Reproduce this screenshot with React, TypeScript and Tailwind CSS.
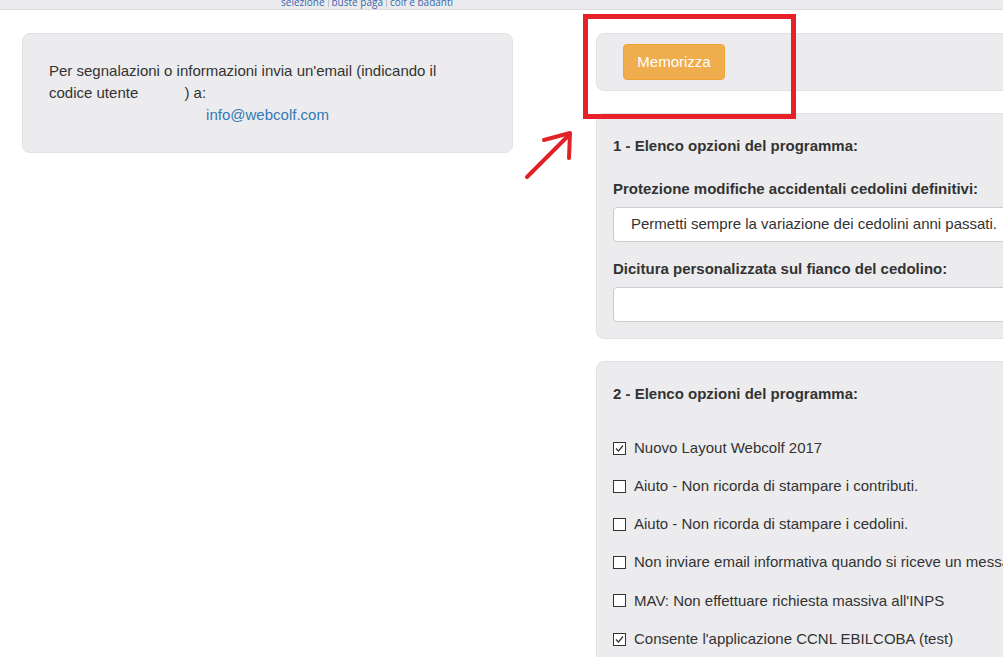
import React from 'react';

const options = [
  { label: 'Nuovo Layout Webcolf 2017', checked: true },
  { label: 'Aiuto - Non ricorda di stampare i contributi.', checked: false },
  { label: 'Aiuto - Non ricorda di stampare i cedolini.', checked: false },
  { label: 'Non inviare email informativa quando si riceve un messaggio', checked: false },
  { label: "MAV: Non effettuare richiesta massiva all'INPS", checked: false },
  { label: "Consente l'applicazione CCNL EBILCOBA (test)", checked: true },
];

const Box = ({ checked }: { checked: boolean }) => (
  <span className="w-[13px] h-[13px] border border-[#333] bg-white flex items-center justify-center shrink-0">
    {checked && (
      <svg width="11" height="11" viewBox="0 0 11 11">
        <path d="M2 5.5 L4.5 8 L9 2.5" fill="none" stroke="#333" strokeWidth="1.2" />
      </svg>
    )}
  </span>
);

const App = () => {
  return (
    <div
      className="relative w-full h-[657px] overflow-hidden bg-white text-[#333] text-[15px]"
      style={{ fontFamily: '"Liberation Sans", Arial, sans-serif' }}
    >
      {/* top header strip, cut off */}
      <div className="h-[10px] bg-[#ebebed] border-b border-[#dcdcdc] overflow-hidden">
        <div className="pl-[281px] mt-[-4px] flex items-center text-[10px] leading-[12px] text-[#3a68ad]" style={{ fontFamily: '"Open Sans", sans-serif' }}>
          <span>selezione</span>
          <span className="mx-[3px] h-[10px] border-l border-[#b8c4d8]" />
          <span>buste paga</span>
          <span className="mx-[3px] h-[10px] border-l border-[#b8c4d8]" />
          <span>colf e badanti</span>
        </div>
      </div>

      <div className="flex pl-[22px] pt-[23px]">
        {/* left column */}
        <div className="w-[491px] shrink-0">
          <div className="bg-[#ececee] border border-[#e2e2e4] rounded-[8px] px-[26px] py-[26px] leading-[22px]">
            <div className="max-w-[425px]">
              Per segnalazioni o informazioni invia un'email (indicando il codice utente{' '}
              <span className="ml-[42px]">) a:</span>
            </div>
            <div className="text-center">
              <a className="text-[#337ab7]">info@webcolf.com</a>
            </div>
          </div>
        </div>

        {/* right column */}
        <div className="ml-[83px] w-[491px] shrink-0 flex flex-col gap-[22px]">
          <div className="bg-[#ececee] border border-[#e2e2e4] rounded-[8px] h-[58px] pt-[10px] pl-[26px]">
            <button className="w-[102px] h-[36px] bg-[#f0ad4e] border border-[#eea236] rounded-[4px] text-white text-[15px]">
              Memorizza
            </button>
          </div>

          <div className="bg-[#ececee] border border-[#e2e2e4] rounded-[8px] pt-[22px] pb-[16px] pl-[16px]">
            <div className="font-bold leading-[20px]">1 - Elenco opzioni del programma:</div>
            <div className="font-bold leading-[20px] mt-[23px]">Protezione modifiche accidentali cedolini definitivi:</div>
            <div className="mt-[8px] h-[35px] bg-white border border-[#cccccc] rounded-[4px] flex items-center pl-[17px] whitespace-nowrap">
              Permetti sempre la variazione dei cedolini anni passati.
            </div>
            <div className="font-bold leading-[20px] mt-[17px]">Dicitura personalizzata sul fianco del cedolino:</div>
            <div className="mt-[8px] h-[35px] bg-white border border-[#cccccc] rounded-[4px]" />
          </div>

          <div className="bg-[#ececee] border border-[#e2e2e4] rounded-[8px] pt-[22px] pl-[16px] pb-[20px]">
            <div className="font-bold leading-[20px]">2 - Elenco opzioni del programma:</div>
            <div className="mt-[25px] flex flex-col">
              {options.map((o) => (
                <div key={o.label} className="h-[38.2px] flex items-center gap-[8px] whitespace-nowrap">
                  <Box checked={o.checked} />
                  <span>{o.label}</span>
                </div>
              ))}
            </div>
          </div>
        </div>
      </div>

      {/* annotation: red rectangle */}
      <div className="absolute left-[583px] top-[14px] w-[213px] h-[105px] border-[5px] border-[#e8202a]" />

      {/* annotation: red arrow */}
      <svg className="absolute left-[520px] top-[125px]" width="60" height="60" viewBox="0 0 60 60">
        <path d="M7 52 L50 9" stroke="#e32227" strokeWidth="4" strokeLinecap="round" fill="none" />
        <path d="M24 15 L50 8 L49 33" stroke="#e32227" strokeWidth="4" strokeLinecap="round" strokeLinejoin="round" fill="none" />
      </svg>
    </div>
  );
};

export default App;
